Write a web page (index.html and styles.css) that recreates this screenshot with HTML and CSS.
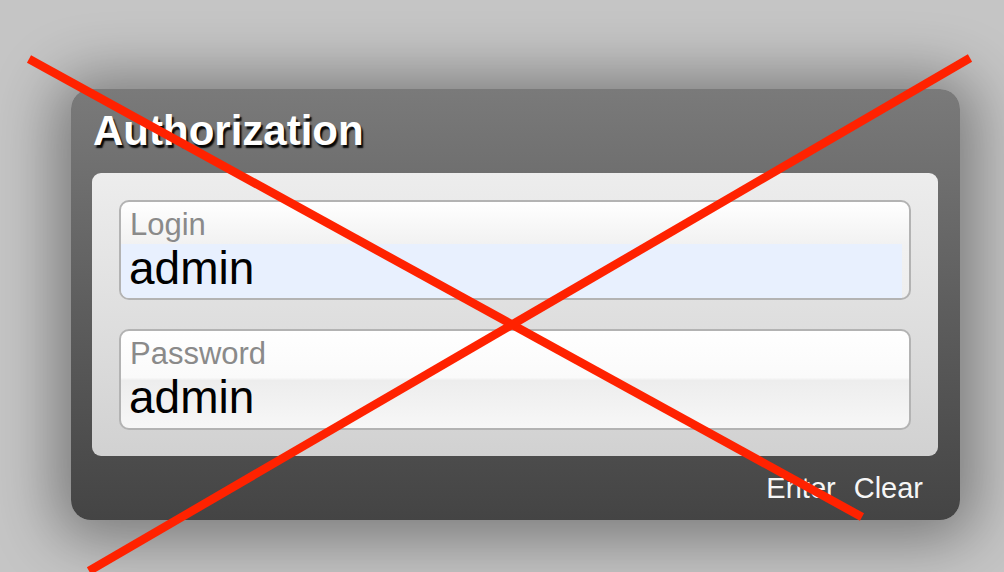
FILE: index.html
```html
<!DOCTYPE html>
<html lang="en">
<head>
<meta charset="utf-8">
<title>Authorization</title>
<link rel="stylesheet" href="styles.css">
</head>
<body>
<div class="scene">
  <div class="panel">
    <h1 class="title">Authorization</h1>
    <div class="box">
      <div class="field field-login">
        <div class="label">Login</div>
        <div class="value value-autofill">admin</div>
      </div>
      <div class="field field-pass">
        <div class="label">Password</div>
        <div class="value">admin</div>
      </div>
    </div>
    <div class="actions">
      <span class="btn">Enter</span>
      <span class="btn">Clear</span>
    </div>
  </div>
  <svg class="cross" viewBox="0 0 1004 572" width="1004" height="572" aria-hidden="true">
    <line x1="29" y1="59" x2="862" y2="517" />
    <line x1="970" y1="58" x2="89" y2="571" />
  </svg>
</div>
</body>
</html>
```
FILE: styles.css
```css
html, body {
  margin: 0;
  padding: 0;
}
body {
  width: 1004px;
  height: 572px;
  overflow: hidden;
  background: #c5c5c5;
  font-family: "Liberation Sans", Arial, sans-serif;
}
.scene {
  position: relative;
  width: 1004px;
  height: 572px;
  padding: 89px 0 0 71px;
  box-sizing: border-box;
}
.panel {
  width: 889px;
  height: 431px;
  border-radius: 20px;
  background: linear-gradient(to bottom, #7a7a7a 0%, #5e5e5e 50%, #444444 100%);
  box-shadow: 0 4px 60px 16px rgba(0, 0, 0, 0.38);
  display: flex;
  flex-direction: column;
}
.title {
  margin: 0;
  padding: 18px 0 18px 22px;
  font-size: 42px;
  line-height: 48px;
  font-weight: bold;
  color: #ffffff;
  text-shadow: 2px 3px 1.5px rgba(0, 0, 0, 0.95);
}
.box {
  margin: 0 22px 0 21px;
  padding: 27px 27px 26px 27px;
  border-radius: 9px;
  background: linear-gradient(to bottom, #ededed 0%, #d1d1d1 100%);
  display: flex;
  flex-direction: column;
  gap: 29px;
}
.field {
  border: 2px solid #b3b3b3;
  border-radius: 10px;
  height: 100px;
  box-sizing: border-box;
  overflow: hidden;
}
.field-login {
  background: linear-gradient(to bottom, #ffffff 0%, #f1f1f1 45%, #eeeeee 100%);
}
.field-pass {
  height: 101px;
  background: linear-gradient(to bottom, #ffffff 0%, #fafafa 48%, #ededed 51%, #f7f7f7 100%);
}
.label {
  padding: 6px 0 0 9px;
  margin-bottom: 2px;
  font-size: 31px;
  line-height: 34px;
  color: #8a8a8a;
}
.value {
  margin-right: 7px;
  padding: 0 0 4px 8px;
  height: 54px;
  box-sizing: border-box;
  font-size: 46px;
  line-height: 48px;
  color: #000000;
}
.value-autofill {
  background: #e8f0fe;
}
.actions {
  display: flex;
  justify-content: flex-end;
  gap: 18px;
  padding: 16px 37px 0 0;
  font-size: 29px;
  line-height: 32px;
  color: #f6f6f6;
}
.cross {
  position: absolute;
  left: 0;
  top: 0;
  pointer-events: none;
}
.cross line {
  stroke: #ff2200;
  stroke-width: 8.5;
  stroke-linecap: butt;
}
```
